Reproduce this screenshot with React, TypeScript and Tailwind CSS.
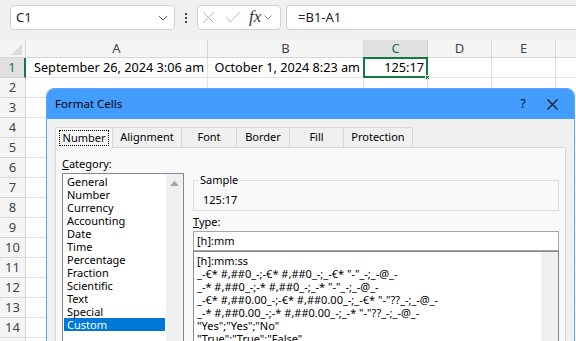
import React from "react";

const cols = [
  { label: "A", w: "w-[182px]" },
  { label: "B", w: "w-[156px]" },
  { label: "C", w: "w-[64px]" },
  { label: "D", w: "w-[64px]" },
  { label: "E", w: "w-[64px]" },
  { label: "F", w: "w-[64px]" },
];

const row1 = ["September 26, 2024 3:06 am", "October 1, 2024 8:23 am", "125:17", "", "", ""];

const categories = [
  "General",
  "Number",
  "Currency",
  "Accounting",
  "Date",
  "Time",
  "Percentage",
  "Fraction",
  "Scientific",
  "Text",
  "Special",
  "Custom",
];

const formats = [
  "[h]:mm:ss",
  '_-€* #,##0_-;-€* #,##0_-;_-€* "-"_-;_-@_-',
  '_-* #,##0_-;-* #,##0_-;_-* "-"_-;_-@_-',
  '_-€* #,##0.00_-;-€* #,##0.00_-;_-€* "-"??_-;_-@_-',
  '_-* #,##0.00_-;-* #,##0.00_-;_-* "-"??_-;_-@_-',
  '"Yes";"Yes";"No"',
  '"True";"True";"False"',
];

const tabs = ["Number", "Alignment", "Font", "Border", "Fill", "Protection"];
const tabWidths = ["w-[58px]", "w-[70px]", "w-[56px]", "w-[54px]", "w-[55px]", "w-[70px]"];

const Chevron = () => (
  <svg width="10" height="6" viewBox="0 0 10 6" fill="none">
    <path d="M1 1l4 4 4-4" stroke="#555" strokeWidth="1" />
  </svg>
);

const FormulaBar = () => (
  <div className="h-[40px] flex items-start pt-[5px] pl-[10px]">
    <div className="w-[165px] h-[25px] shrink-0 bg-white border border-[#d1d1d1] rounded-[4px] flex items-center pl-[5px] pr-[6px]">
      <span className="flex-1 text-[13px] text-[#222]">C1</span>
      <Chevron />
    </div>
    <div className="w-[22px] h-[25px] shrink-0 flex flex-col items-center justify-center gap-[2px]">
      <div className="w-[2px] h-[2px] bg-[#444]" />
      <div className="w-[2px] h-[2px] bg-[#444]" />
      <div className="w-[2px] h-[2px] bg-[#444]" />
    </div>
    <div className="w-[84px] h-[25px] shrink-0 bg-white border border-[#d1d1d1] rounded-[4px] flex items-center pl-[5px]">
      <svg width="11" height="11" viewBox="0 0 11 11" fill="none">
        <path d="M0.5 0.5l10 10M10.5 0.5l-10 10" stroke="#b4b4b4" strokeWidth="1" />
      </svg>
      <svg className="ml-[12px]" width="14" height="11" viewBox="0 0 14 11" fill="none">
        <path d="M0.5 5.5l4 4.5 9-9.5" stroke="#b4b4b4" strokeWidth="1" />
      </svg>
      <span className="ml-[9px] font-['Liberation_Serif'] italic text-[17px] text-[#333] leading-none pb-[2px]">fx</span>
      <span className="ml-[3px] flex items-center">
        <svg width="8" height="5" viewBox="0 0 8 5" fill="none">
          <path d="M0.5 0.5l3.5 3.5 3.5-3.5" stroke="#888" strokeWidth="1" />
        </svg>
      </span>
    </div>
    <div className="ml-[5px] flex-1 h-[25px] bg-white border border-[#d1d1d1] border-r-0 rounded-l-[4px] flex items-center pl-[11px] text-[13px] text-[#222]">
      =B1-A1
    </div>
  </div>
);

const Grid = () => (
  <div className="bg-white">
    <div className="flex h-[18px]">
      <div className="w-[26px] shrink-0 bg-[#f5f5f5] border-r border-b border-[#d6d6d6] flex items-end justify-end pr-[3px] pb-[2px]">
        <svg width="11" height="11" viewBox="0 0 11 11">
          <path d="M11 0L11 11L0 11Z" fill="#dcdcdc" />
        </svg>
      </div>
      {cols.map((c) => (
        <div
          key={c.label}
          className={`${c.w} shrink-0 border-r border-b flex items-center justify-center text-[13px] ${
            c.label === "C"
              ? "bg-[#e0e0e0] text-[#107c41] border-[#c8c8c8]"
              : "bg-[#f5f5f5] text-[#444] border-[#d6d6d6]"
          }`}
        >
          {c.label}
        </div>
      ))}
    </div>
    {Array.from({ length: 15 }, (_, i) => i + 1).map((r) => (
      <div key={r} className="flex h-[20px]">
        <div
          className={`w-[26px] shrink-0 border-b flex items-center justify-center text-[13px] ${
            r === 1
              ? "bg-[#e0e0e0] text-[#107c41] border-[#d6d6d6] border-r-2 border-r-[#107c41]"
              : "bg-[#f5f5f5] text-[#444] border-[#d6d6d6] border-r"
          }`}
        >
          {r}
        </div>
        {cols.map((c, ci) => (
          <div
            key={c.label}
            className={`${c.w} shrink-0 relative border-r border-b border-[#e1e1e1] flex items-center justify-end pr-[3px] text-[12.7px] text-black whitespace-nowrap`}
          >
            {r === 1 ? row1[ci] : ""}
            {r === 1 && c.label === "C" && (
              <>
                <div className="absolute -left-[1px] -top-[1px] -right-[1px] -bottom-[1px] border-2 border-[#107c41]" />
                <div className="absolute -right-[3px] -bottom-[3px] w-[5px] h-[5px] bg-[#107c41] border border-white" />
              </>
            )}
          </div>
        ))}
      </div>
    ))}
  </div>
);

const Dialog = () => (
  <div className="absolute left-[46px] top-[88px] w-[529px] h-[270px] rounded-t-[8px] border border-[#5aa7f7] bg-[#f0f0f0] overflow-hidden font-['Noto_Sans',sans-serif] text-[11px] text-black">
    <div className="h-[30px] bg-[#429dff] flex items-center pl-[8px]">
      <span className="flex-1 text-[11.5px]">Format Cells</span>
      <span className="w-[12px] text-[12px] text-center">?</span>
      <span className="w-[45px] flex justify-end pr-[16px]">
        <svg width="11" height="11" viewBox="0 0 11 11" fill="none">
          <path d="M0.5 0.5l10 10M10.5 0.5l-10 10" stroke="#111" strokeWidth="1.1" />
        </svg>
      </span>
    </div>
    <div className="px-[8px] pt-[8px]">
      <div className="flex h-[20px]">
        {tabs.map((t, i) => (
          <div
            key={t}
            className={`${tabWidths[i]} shrink-0 border border-[#d9d9d9] border-b-0 flex items-center justify-center ${
              i === 0 ? "bg-[#f9f9f9] -mb-[1px] relative z-10" : "bg-[#f0f0f0] -ml-[1px]"
            }`}
          >
            {i === 0 ? (
              <span className="border border-dotted border-black px-[3px] leading-[14px]">{t}</span>
            ) : (
              t
            )}
          </div>
        ))}
      </div>
      <div className="h-[240px] border border-[#d9d9d9] bg-[#f9f9f9] flex pl-[6px] pr-[6px] pt-[9px]">
        <div className="w-[122px] shrink-0">
          <div className="leading-[14px]">
            <span className="underline">C</span>ategory:
          </div>
          <div className="mt-[2px] h-[200px] bg-white border border-[#828790] flex">
            <div className="flex-1 p-[1px]">
              {categories.map((c) => (
                <div
                  key={c}
                  className={`h-[13px] leading-[13px] pl-[3px] ${c === "Custom" ? "bg-[#0078d7] text-white" : ""}`}
                >
                  {c}
                </div>
              ))}
            </div>
            <div className="w-[17px] bg-[#f0f0f0] flex justify-center pt-[7px]">
              <svg width="9" height="5" viewBox="0 0 9 5">
                <path d="M0 5L4.5 0L9 5Z" fill="#a3a3a3" />
              </svg>
            </div>
          </div>
        </div>
        <div className="ml-[9px] w-[366px] shrink-0">
          <fieldset className="mt-[16px] border border-[#dcdcdc] pl-[4px]">
            <legend className="px-[2px] leading-[14px]">Sample</legend>
            <div className="pt-[6px] pb-[3px] pl-[5px] leading-[14px]">125:17</div>
          </fieldset>
          <div className="mt-[4px] leading-[14px]">
            <span className="underline">T</span>ype:
          </div>
          <div className="mt-[2px] h-[20px] bg-white border border-[#a6a6a6] flex items-center pl-[3px]">[h]:mm</div>
          <div className="h-[120px] bg-white border border-[#828790] flex">
            <div className="flex-1 pt-[2px] pl-[3px] whitespace-pre">
              {formats.map((f) => (
                <div key={f} className="h-[13px] leading-[13px]">
                  {f}
                </div>
              ))}
            </div>
            <div className="w-[17px] bg-[#f0f0f0]" />
          </div>
        </div>
      </div>
    </div>
  </div>
);

const App: React.FC = () => {
  return (
    <div className="relative w-[576px] h-[341px] overflow-hidden bg-[#f0f0f0] font-['Noto_Sans',sans-serif]">
      <FormulaBar />
      <Grid />
      <Dialog />
    </div>
  );
};

export default App;
